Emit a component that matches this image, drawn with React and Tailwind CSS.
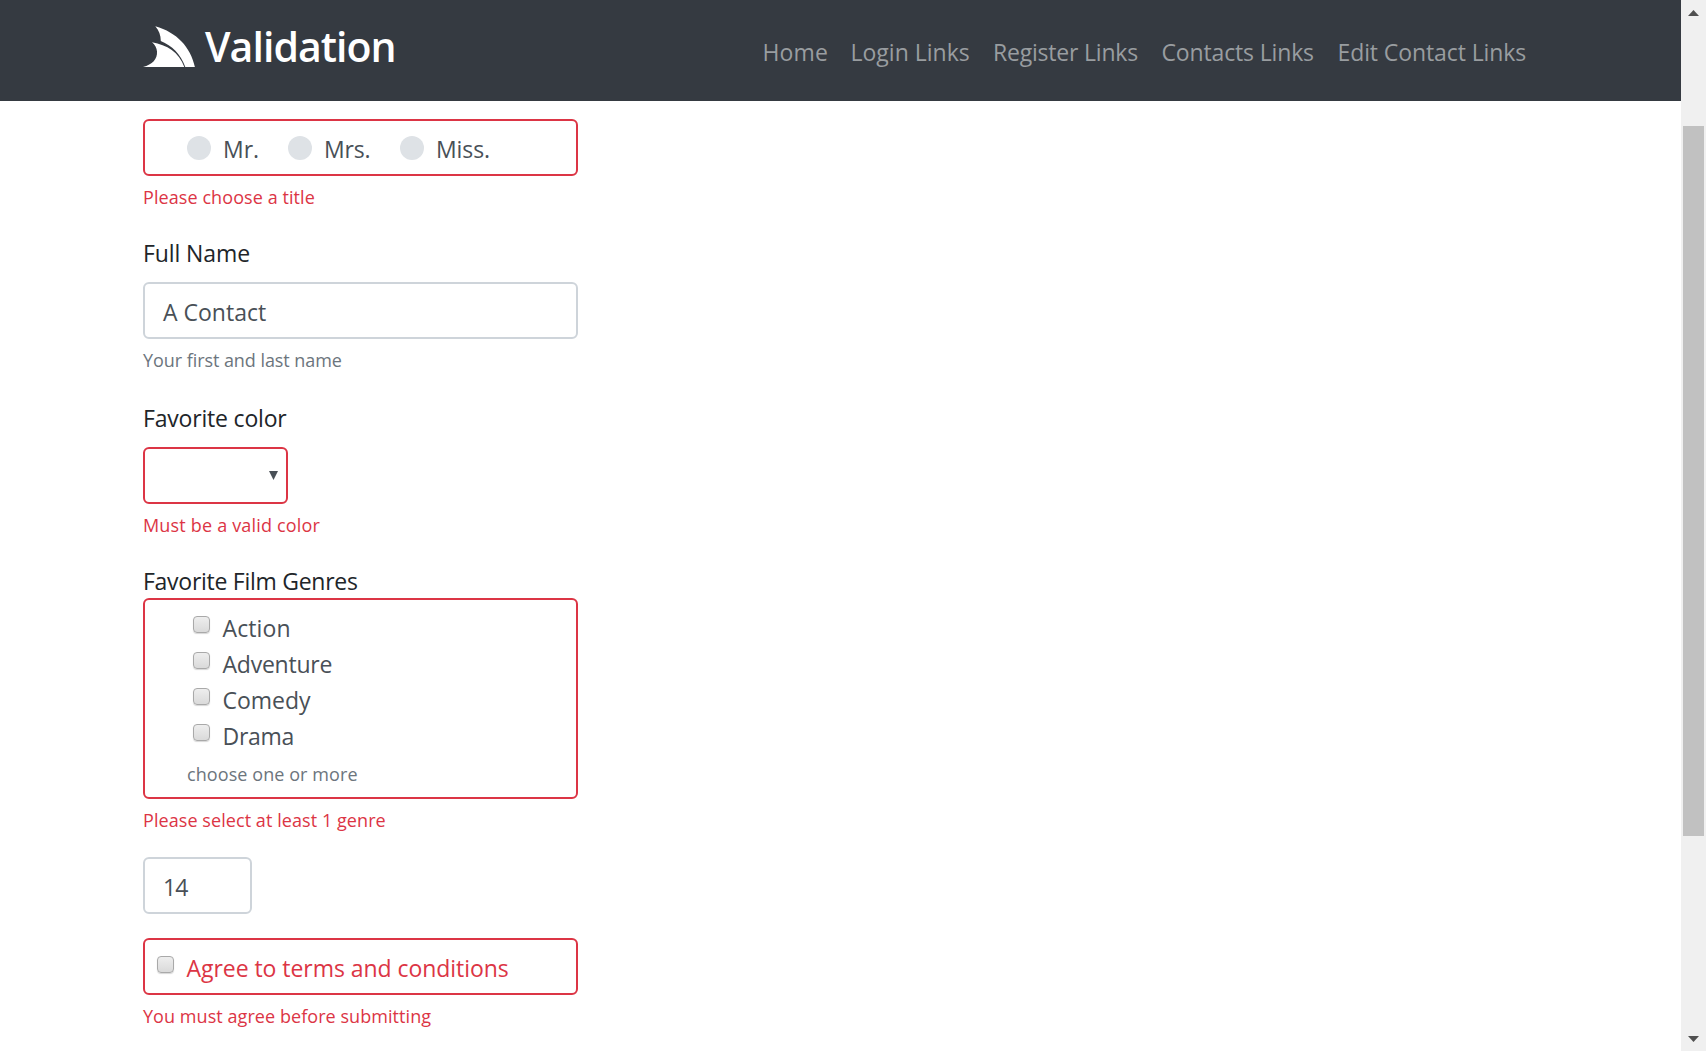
const ERROR = 'border-[#dc3545]';
const NORMAL = 'border-[#ced4da]';

function Logo() {
  return (
    <svg className="mt-[26px] h-[42px] w-[53px] shrink-0" viewBox="0 0 53 42" fill="#fff">
      <path d="M12.300 .3C34 6.500 47.500 21 51.900 41H42.300C37.500 28 29 19.500 17.800 15 17.800 9 16 4.500 12.300 .3Z" />
      <path d="M9 16.300C24 19 36 26 41.300 41H0C9.500 38.500 14.500 33 14 25.500 13.800 22 12 19 9 16.300Z" />
    </svg>
  );
}

function Check() {
  return (
    <span className="block h-[17px] w-[17px] shrink-0 rounded-[4px] border-[1.5px] border-[#a9a9a9] bg-linear-to-b from-[#eeeeee] to-[#dadada] shadow-[0_1px_1px_rgba(0,0,0,0.16)]" />
  );
}

function Label({ children, className }) {
  return <div className={`whitespace-nowrap text-[23px] leading-[36px] text-[#212529] ${className}`}>{children}</div>;
}

function Note({ children, className }) {
  return <div className={`mt-[6px] h-[29px] whitespace-nowrap pt-px text-[18px] leading-[29px] ${className}`}>{children}</div>;
}

function Field({ children, className }) {
  return <div className={`rounded-[6px] border-2 bg-white text-[23px] leading-[36px] text-[#495057] ${className}`}>{children}</div>;
}

function Radio({ label, className }) {
  return (
    <div className={`flex ${className}`}>
      <span className="mt-[15px] mr-[12px] size-6 shrink-0 rounded-full bg-[#dee2e6]" />
      <span className="mt-[10px]">{label}</span>
    </div>
  );
}

const genres = [
  ['Action', 'tracking-[0.12px]'],
  ['Adventure', 'tracking-[-0.23px]'],
  ['Comedy', ''],
  ['Drama', 'tracking-[-0.3px]'],
];

export default function App() {
  return (
    <div className="flex h-[1051px] w-[1706px] overflow-hidden bg-white font-['Open_Sans','Noto_Sans',sans-serif]">
      <div className="w-[1681px]">
        <header className="flex h-[101px] bg-[#353a41] pl-[143px]">
          <Logo />
          <div className="mt-[15px] ml-[9px] w-[557.500px] text-[41px] leading-[62px] font-semibold tracking-[-0.95px] text-white">Validation</div>
          <nav className="mt-[34px] flex text-[23px] leading-[36px] whitespace-nowrap text-[#999da0]">
            <a className="w-[88px] tracking-[0.1px]">Home</a>
            <a className="w-[142.500px]">Login Links</a>
            <a className="w-[168.500px] tracking-[-0.2px]">Register Links</a>
            <a className="w-[176px] tracking-[-0.15px]">Contacts Links</a>
            <a className="tracking-[-0.1px]">Edit Contact Links</a>
          </nav>
        </header>
        <main className="pt-[18px] pl-[143px]">
          <Field className={`flex h-[57px] w-[435px] pl-[42px] ${ERROR}`}>
            <Radio label="Mr." className="w-[101px]" />
            <Radio label="Mrs." className="w-[112px] tracking-[-0.18px]" />
            <Radio label="Miss." className="tracking-[-0.1px]" />
          </Field>
          <Note className="tracking-[0.08px] text-[#dc3545]">Please choose a title</Note>

          <Label className="mt-6 mb-[11px] tracking-[-0.1px]">Full Name</Label>
          <Field className={`h-[57px] w-[435px] pt-[10px] pl-[18px] ${NORMAL}`}>A Contact</Field>
          <Note className="tracking-[-0.06px] text-[#6c757d]">Your first and last name</Note>

          <Label className="mt-[26px] mb-[11px] tracking-[-0.19px]">Favorite color</Label>
          <Field className={`flex h-[57px] w-[145px] justify-end pt-[22px] pr-[8px] ${ERROR}`}>
            <svg className="h-[9px] w-[9px]" viewBox="0 0 9 9" fill="#495057"><path d="M0 0H9L4.500 9Z" /></svg>
          </Field>
          <Note className="tracking-[0.18px] text-[#dc3545]">Must be a valid color</Note>

          <Label className="mt-6 h-[35px] tracking-[-0.27px]">Favorite Film Genres</Label>
          <Field className={`h-[201px] w-[435px] pt-[10px] pl-[42px] ${ERROR}`}>
            {genres.map(([name, spacing]) => (
              <div key={name} className="flex h-9 pl-[6px]">
                <div className="mt-[6px] mr-[12.500px]"><Check /></div>
                <span className={spacing}>{name}</span>
              </div>
            ))}
            <div className="-mt-px">
              <Note className="tracking-[0.08px] text-[#6c757d]">choose one or more</Note>
            </div>
          </Field>
          <Note className="tracking-[0.07px] text-[#dc3545]">Please select at least 1 genre</Note>

          <Field className={`mt-[23px] h-[57px] w-[109px] pt-[10px] pl-[18px] tracking-[-0.8px] ${NORMAL}`}>14</Field>

          <Field className={`mt-6 flex h-[57px] w-[435px] pl-[12px] ${ERROR}`}>
            <div className="mt-[16px] mr-[12.500px]"><Check /></div>
            <span className="mt-[10px] whitespace-nowrap tracking-[-0.05px] text-[#dc3545]">Agree to terms and conditions</span>
          </Field>
          <Note className="tracking-[0.06px] text-[#dc3545]">You must agree before submitting</Note>
        </main>
      </div>
      <aside className="flex w-[25px] flex-col items-center bg-[#f0f0f0]">
        <svg className="mt-[10px] h-[6px] w-[11px]" viewBox="0 0 11 6" fill="#505050"><path d="M0 6 5.500 0 11 6Z" /></svg>
        <div className="mt-[110px] h-[710px] w-[21px] bg-[#c1c1c1]" />
        <svg className="mt-[200px] h-[6px] w-[11px]" viewBox="0 0 11 6" fill="#505050"><path d="M0 0 5.500 6 11 0Z" /></svg>
      </aside>
    </div>
  );
}
